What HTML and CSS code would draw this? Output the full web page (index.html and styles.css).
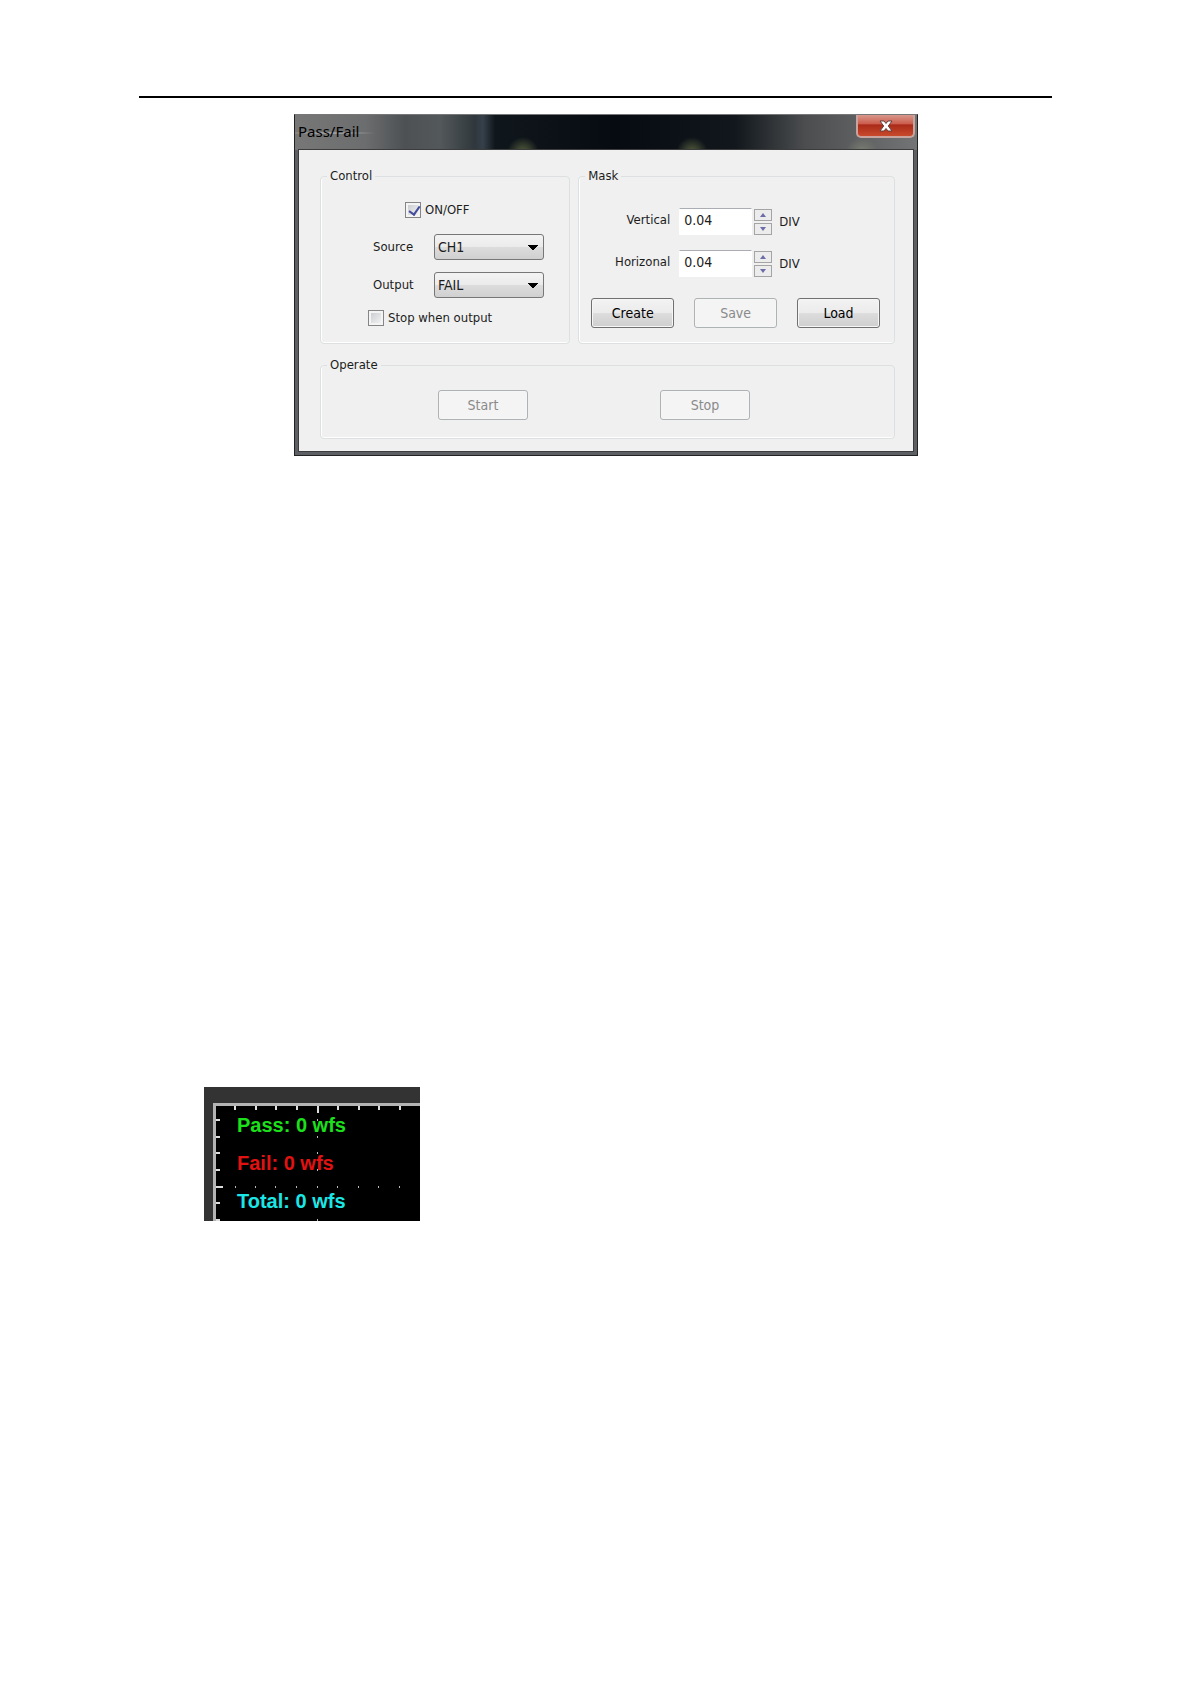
FILE: index.html
```
<!DOCTYPE html>
<html lang="en">
<head>
    <meta charset="UTF-8">
    <meta name="viewport" content="width=device-width, initial-scale=1.0">
    <title>Pass/Fail</title>
    <link rel="stylesheet" href="styles.css">
</head>
<body>
    <div class="page">
        <hr class="page-rule">

        <!-- Pass/Fail dialog -->
        <form class="dialog">
            <div class="title-bar">
                <span class="title">Pass/Fail</span>
                <button type="button" class="close-button" aria-label="Close">
                    <svg width="14" height="12" viewBox="0 0 14 12">
                        <path d="M1 1h4l2 2.5L9 1h4L9.3 6 13 11H9L7 8.5 5 11H1l3.7-5z" fill="#fff" stroke="#64403c" stroke-width="1"/>
                    </svg>
                </button>
            </div>

            <div class="client">
                <div class="groups">
                    <fieldset class="group control">
                        <legend>Control</legend>
                        <label class="check-row on-off"><input type="checkbox" checked> ON/OFF</label>
                        <div class="select-row">
                            <label for="source">Source</label>
                            <select id="source">
                                <option>CH1</option>
                                <option>CH2</option>
                            </select>
                        </div>
                        <div class="select-row">
                            <label for="output">Output</label>
                            <select id="output">
                                <option>FAIL</option>
                                <option>PASS</option>
                            </select>
                        </div>
                        <label class="check-row stop-output"><input type="checkbox"> Stop when output</label>
                    </fieldset>

                    <fieldset class="group mask">
                        <legend>Mask</legend>
                        <div class="spin-row">
                            <label for="vertical">Vertical</label>
                            <input type="text" id="vertical" value="0.04">
                            <div class="spinner">
                                <button type="button" class="spin-button up" aria-label="Increase"></button>
                                <button type="button" class="spin-button down" aria-label="Decrease"></button>
                            </div>
                            <span>DIV</span>
                        </div>
                        <div class="spin-row">
                            <label for="horizonal">Horizonal</label>
                            <input type="text" id="horizonal" value="0.04">
                            <div class="spinner">
                                <button type="button" class="spin-button up" aria-label="Increase"></button>
                                <button type="button" class="spin-button down" aria-label="Decrease"></button>
                            </div>
                            <span>DIV</span>
                        </div>
                        <div class="mask-buttons">
                            <button type="button" class="button">Create</button>
                            <button type="button" class="button" disabled>Save</button>
                            <button type="button" class="button">Load</button>
                        </div>
                    </fieldset>
                </div>

                <fieldset class="group operate">
                    <legend>Operate</legend>
                    <div class="operate-buttons">
                        <button type="button" class="button" disabled>Start</button>
                        <button type="button" class="button" disabled>Stop</button>
                    </div>
                </fieldset>
            </div>
        </form>

        <!-- result counters on the scope screen -->
        <div class="scope">
            <div class="screen">
                <svg class="graticule" width="204" height="115" viewBox="0 0 204 115">
                    <g stroke="#ddd" stroke-width="2" fill="none">
                        <path d="M19 0v4M40 0v4M60 0v4M81 0v4M122 0v4M143 0v4M163 0v4M184 0v4M102 0v7"/>
                        <path d="M0 14h4M0 31h4M0 47h4M0 64h4M0 97h4M0 114h4M0 81h7"/>
                    </g>
                    <path d="M19 81h1M39 81h1M59 81h1M80 81h1M101 81h1M121 81h1M142 81h1M162 81h1M183 81h1M101 14h1M101 31h1M101 47h1M101 64h1M101 97h1M101 114h1" stroke="#bbb" stroke-width="2"/>
                </svg>
                <p class="pass">Pass: 0 wfs</p>
                <p class="fail">Fail: 0 wfs</p>
                <p class="total">Total: 0 wfs</p>
            </div>
        </div>
    </div>
</body>
</html>
```

FILE: styles.css
```
* {
    box-sizing: border-box;
}

body {
    margin: 0;
    background-color: #fff;
    font-family: "DejaVu Sans Condensed", "DejaVu Sans", sans-serif;
    font-size: 13px;
    line-height: 16px;
    color: #1c1c1c;
}

.page {
    min-height: 100vh;
    padding: 96px 139px 0;
}

.page-rule {
    height: 2px;
    margin: 0 0 16px;
    border: none;
    background-color: #000;
}

/* dialog window */
.dialog {
    width: 624px;
    margin-left: 155px;
    padding: 0 3px 3px;
    border: 1px solid #222;
    border-top-color: #777;
    background-color: #5c5f63;
    background-image:
        radial-gradient(circle at 228px 38px, #59623f 0, transparent 16px),
        radial-gradient(circle at 397px 38px, #59623f 0, transparent 16px),
        radial-gradient(circle at 567px 38px, #7b8071 0, transparent 16px),
        radial-gradient(ellipse at 35px 18px, rgba(205, 205, 205, 0.7) 0, transparent 48px),
        linear-gradient(90deg, #777 0, #6c6d6e 70px, #4d5154 110px, #53585a 145px, #30383d 180px, #36404a 188px, #10171c 200px, #060b12 320px, #11171c 440px, #4b4d4f 510px, #737476 100%);
    background-size: 100% 35px;
    background-repeat: no-repeat;
}

.title-bar {
    display: flex;
    justify-content: space-between;
    height: 34px;
}

.title {
    padding-top: 8px;
    font-family: "Noto Sans", sans-serif;
    font-size: 15px;
    color: #000;
}

.close-button {
    display: flex;
    align-items: center;
    justify-content: center;
    width: 59px;
    height: 23px;
    margin-right: -1px;
    padding: 0;
    border: 2px solid #c9a49f;
    border-top: none;
    border-radius: 0 0 5px 5px;
    background: linear-gradient(#d9988c 0, #cb5a4b 44%, #a92a18 46%, #c84a2c 100%);
}

.client {
    padding: 18px 18px 12px 21px;
    border: 1px solid #3c3c3c;
    background-color: #f0f0f0;
}

.groups {
    display: flex;
    gap: 8px;
    margin-bottom: 13px;
}

.group {
    min-width: 0;
    margin: 0;
    padding: 0;
    border: 1px solid #dce0e0;
    border-radius: 4px;
    box-shadow: inset 0 -1px #fff, inset 1px 0 #fff;
}

legend {
    margin-left: 6px;
    padding: 0 3px;
}

.control {
    flex: 250;
    padding-top: 18px;
    padding-bottom: 13px;
}

.mask {
    flex: 317;
    padding-top: 24px;
    padding-bottom: 14px;
}

/* check boxes */
.check-row {
    display: flex;
    gap: 4px;
    height: 20px;
}

.on-off {
    margin: 0 0 12px 84px;
}

.stop-output {
    margin-left: 47px;
}

input[type="checkbox"] {
    appearance: none;
    width: 16px;
    height: 16px;
    margin: 0;
    border: 1px solid #858585;
    background: linear-gradient(135deg, #c4c8cc, #f8f8f8);
    box-shadow: inset 0 0 0 2px #f4f4f4;
}

input[type="checkbox"]:checked::before {
    content: "";
    display: block;
    width: 5px;
    height: 9px;
    margin: 1px 0 0 5px;
    border: solid #444c9c;
    border-width: 0 2px 2px 0;
    transform: rotate(35deg);
}

/* drop-downs */
.select-row {
    display: flex;
    align-items: center;
    margin: 0 25px 12px 52px;
}

.select-row label {
    width: 61px;
}

select {
    appearance: none;
    flex: 1;
    height: 26px;
    padding: 0 3px;
    border: 1px solid #777;
    border-radius: 3px;
    background:
        linear-gradient(to bottom left, #000 50%, transparent 52%) right 10px center / 5px 5px no-repeat,
        linear-gradient(to bottom right, #000 50%, transparent 52%) right 5px center / 5px 5px no-repeat,
        linear-gradient(#f3f3f3 0, #ebebeb 50%, #dcdcdc 52%, #d0d0d0 100%);
    font: inherit;
    font-size: 14px;
    color: inherit;
}

/* spin boxes */
.spin-row {
    display: flex;
    align-items: center;
    margin-bottom: 15px;
}

.spin-row label {
    width: 91px;
    margin-right: 9px;
    padding-bottom: 4px;
    text-align: right;
}

input[type="text"] {
    width: 73px;
    height: 27px;
    margin: 0 2px 0 0;
    padding: 0 4px 4px;
    border: 1px solid #fff;
    border-top-color: #aaadb2;
    background-color: #fff;
    font: inherit;
    font-size: 14px;
    color: inherit;
}

.spinner {
    display: flex;
    flex-direction: column;
    gap: 2px;
    margin-right: 7px;
}

.spin-button {
    display: flex;
    align-items: center;
    justify-content: center;
    width: 18px;
    height: 12px;
    padding: 0;
    border: 1px solid #a4a4a4;
    background-color: #ececec;
}

.spin-button::before {
    content: "";
    border: 3px solid transparent;
}

.up::before {
    border-top: none;
    border-bottom: 4px solid #6c6ca8;
}

.down::before {
    border-bottom: none;
    border-top: 4px solid #6c6ca8;
}

/* push buttons */
.button {
    width: 83px;
    height: 30px;
    padding: 0;
    border: 1px solid #707070;
    border-radius: 3px;
    background: linear-gradient(#f3f3f3 0, #ebebeb 50%, #dcdcdc 52%, #cfcfcf 100%);
    box-shadow: inset 0 0 0 1px #f6f6f6;
    font: inherit;
    font-size: 14px;
    color: #000;
}

.button:disabled {
    border-color: #adb2b5;
    background: #f4f4f4;
    color: #8a8a8a;
}

.mask-buttons {
    display: flex;
    justify-content: space-between;
    margin: 21px 14px 0 12px;
}

.operate-buttons {
    display: flex;
    gap: 132px;
    padding: 17px 0 18px 117px;
}

.operate .button {
    width: 90px;
}

/* scope screen */
.scope {
    width: 216px;
    margin: 631px 0 0 65px;
    padding: 16px 0 0 9px;
    background-color: #333;
}

.screen {
    position: relative;
    height: 118px;
    padding-left: 21px;
    border: solid #b4b4b4;
    border-width: 3px 0 0 3px;
    background-color: #000;
    font: bold 20px/38px "Liberation Sans", Arial, sans-serif;
}

.screen p {
    margin: 0;
}

.graticule {
    position: absolute;
    top: 0;
    left: 0;
}

.pass {
    color: #1be01b;
}

.fail {
    color: #e01212;
}

.total {
    color: #1be6e6;
}
```
